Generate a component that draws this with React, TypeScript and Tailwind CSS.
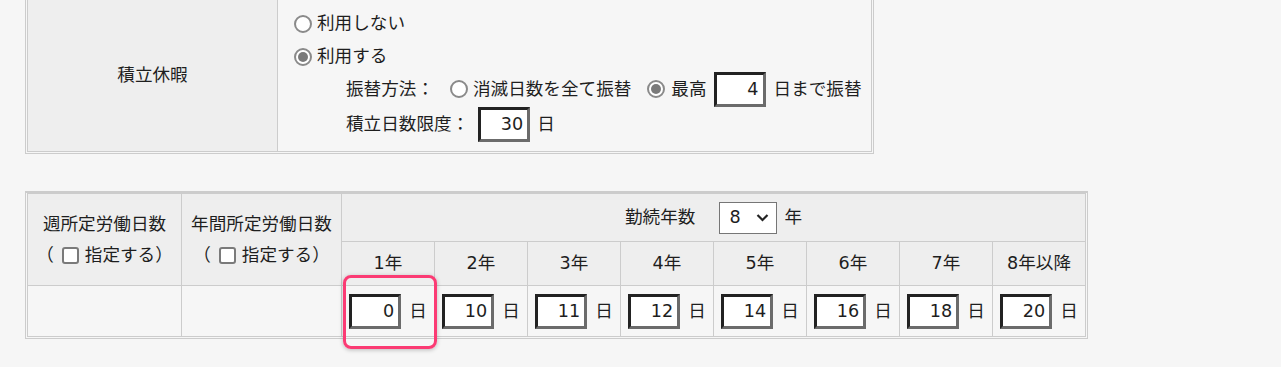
const years = [
  { label: '1年', days: '0' },
  { label: '2年', days: '10' },
  { label: '3年', days: '11' },
  { label: '4年', days: '12' },
  { label: '5年', days: '14' },
  { label: '6年', days: '16' },
  { label: '7年', days: '18' },
  { label: '8年以降', days: '20' },
];

const Radio = ({ checked }: { checked?: boolean }) => (
  <span className="inline-flex h-[18px] w-[18px] shrink-0 items-center justify-center rounded-full border-2 border-[#8a8a8a] bg-white align-middle">
    {checked && <span className="h-[10px] w-[10px] rounded-full bg-[#7a7a7a]" />}
  </span>
);

const Checkbox = () => (
  <span className="inline-block h-[17px] w-[17px] shrink-0 rounded-[3px] border-2 border-[#7a7a7a] bg-white align-middle" />
);

const NumBox = ({ value }: { value: string }) => (
  <input
    readOnly
    value={value}
    className="h-[35px] w-[52px] shrink-0 border-[3px] border-t-[#222] border-l-[#222] border-r-[#6b6b6b] border-b-[#6b6b6b] bg-white pr-[4px] text-right outline-none"
  />
);

export default function App() {
  return (
    <div className="min-h-[371px] bg-[#f6f6f6] pl-[25px] font-['DejaVu_Sans','Noto_Sans_CJK_JP',sans-serif] text-[17.6px] text-[#1e1e1e]">
      {/* 積立休暇 */}
      <div className="-mt-[4px] w-[849px] border border-[#ccc] p-px">
        <table className="w-full border-collapse">
          <tbody>
            <tr>
              <td className="w-[250px] border border-[#ccc] bg-[#eee] text-center">積立休暇</td>
              <td className="border border-[#ccc] bg-[#f6f6f6] pt-[8px] pb-[8px] pl-[16px]">
                <div className="flex h-[33px] items-center gap-[5px]">
                  <Radio />
                  <span>利用しない</span>
                </div>
                <div className="flex h-[33px] items-center gap-[5px]">
                  <Radio checked />
                  <span>利用する</span>
                </div>
                <div className="ml-[52px] flex h-[32px] items-center">
                  <span>振替方法：</span>
                  <span className="ml-[16px] flex"><Radio /></span>
                  <span className="ml-[5px]">消滅日数を全て振替</span>
                  <span className="ml-[16px] flex"><Radio checked /></span>
                  <span className="ml-[6px]">最高</span>
                  <span className="ml-[7px] flex"><NumBox value="4" /></span>
                  <span className="ml-[8px]">日まで振替</span>
                </div>
                <div className="ml-[52px] flex h-[38px] items-center">
                  <span>積立日数限度：</span>
                  <span className="ml-[9px] flex"><NumBox value="30" /></span>
                  <span className="ml-[7px]">日</span>
                </div>
              </td>
            </tr>
          </tbody>
        </table>
      </div>

      {/* 勤続年数ごとの付与日数 */}
      <div className="mt-[37px] w-[1063px] border border-t-2 border-[#ccc] px-px pb-px">
        <table className="w-[1059px] table-fixed border-collapse">
          <colgroup>
            <col className="w-[154px]" />
            <col className="w-[160px]" />
            {years.map((y) => (
              <col key={y.label} className="w-[93px]" />
            ))}
          </colgroup>
          <tbody>
            <tr className="bg-[#eee]">
              {['週所定労働日数', '年間所定労働日数'].map((t) => (
                <td key={t} rowSpan={2} className="border border-[#ccc] text-center">
                  <div className="flex h-[31px] items-center justify-center">{t}</div>
                  <div className="flex h-[31px] items-center justify-center">
                    <span>（</span>
                    <span className="ml-[8px] mr-[6px] flex"><Checkbox /></span>
                    <span>指定する）</span>
                  </div>
                </td>
              ))}
              <td colSpan={8} className="h-[48px] border border-[#ccc]">
                <div className="flex items-center justify-center">
                  <span>勤続年数</span>
                  <div className="ml-[24px] flex h-[32px] w-[58px] items-center justify-between border border-[#767676] bg-white pl-[9px] pr-[7px]">
                    <span>8</span>
                    <svg width="13" height="9" viewBox="0 0 13 9" fill="none">
                      <path d="M1.5 2 L6.5 7 L11.5 2" stroke="#222" strokeWidth="2.2" />
                    </svg>
                  </div>
                  <span className="ml-[7px]">年</span>
                </div>
              </td>
            </tr>
            <tr className="bg-[#eee]">
              {years.map((y) => (
                <td key={y.label} className="h-[44px] border border-[#ccc] text-center">
                  {y.label}
                </td>
              ))}
            </tr>
            <tr className="bg-[#f6f6f6]">
              <td className="h-[51px] border border-[#ccc]" />
              <td className="border border-[#ccc]" />
              {years.map((y, i) => (
                <td key={y.label} className="relative border border-[#ccc]">
                  <div className="flex items-center justify-center gap-[8px]">
                    <NumBox value={y.days} />
                    <span>日</span>
                  </div>
                  {i === 0 && (
                    <div className="pointer-events-none absolute left-[1px] top-[-11px] h-[74px] w-[94px] rounded-[8px] border-[3px] border-[#fb3b74] shadow-[0_1px_4px_rgba(0,0,0,0.25)]" />
                  )}
                </td>
              ))}
            </tr>
          </tbody>
        </table>
      </div>
    </div>
  );
}
